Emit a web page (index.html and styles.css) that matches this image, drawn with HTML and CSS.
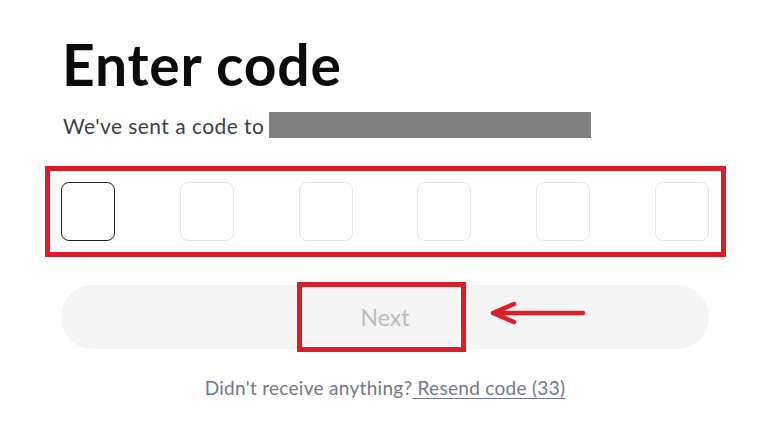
FILE: index.html
```html
<!DOCTYPE html>
<html lang="en">

<head>
  <meta charset="UTF-8" />
  <title>Enter code</title>
  <meta name="viewport" content="width=device-width, initial-scale=1.0">
  <link rel="stylesheet" href="styles.css">
</head>

<body>
  <main class="verify">
    <h1 class="verify-title">Enter code</h1>
    <p class="verify-sub">
      <span>We've sent a code to</span>
      <span class="redacted"></span>
    </p>

    <div class="code-row">
      <div class="code-box active"></div>
      <div class="code-box"></div>
      <div class="code-box"></div>
      <div class="code-box"></div>
      <div class="code-box"></div>
      <div class="code-box"></div>
    </div>

    <button class="next-btn" disabled>Next</button>

    <p class="resend">Didn't receive anything?<a href="#" class="resend-link"> Resend code (33)</a></p>

    <!-- 标注 -->
    <div class="mark mark-code"></div>
    <div class="mark mark-next"></div>
    <svg class="mark-arrow" width="100" height="26" viewBox="0 0 100 26">
      <path d="M94 13 H4 M25 4 L4 13 L25 22" fill="none" stroke="#dc1f29" stroke-width="4.5" stroke-linecap="round" stroke-linejoin="round" />
    </svg>
  </main>
</body>

</html>
```

FILE: styles.css
```css
body {
  margin: 0;
  background: #fff;
  font-family: Lato, 'Noto Sans', sans-serif;
}

.verify {
  position: relative;
  width: 648px;
  padding: 31px 0 0 61px;
}

.verify-title {
  font-size: 57px;
  line-height: 67px;
  font-weight: 700;
  letter-spacing: 0.8px;
  color: #0b0b0b;
  margin: 0 0 0 1px;
}

.verify-sub {
  display: flex;
  align-items: center;
  gap: 5px;
  margin: 14px 0 0 2px;
  height: 26px;
  font-size: 21px;
  letter-spacing: 0.45px;
  color: #3a3f47;
}

.redacted {
  display: block;
  width: 322px;
  height: 26px;
  background: #808080;
}

.code-row {
  display: flex;
  justify-content: space-between;
  margin-top: 44px;
}

.code-box {
  width: 54px;
  height: 59px;
  box-sizing: border-box;
  border: 1px solid #e3e5e8;
  border-radius: 8px;
}

.code-box.active {
  border: 1.5px solid #1e2329;
}

.next-btn {
  display: block;
  width: 100%;
  height: 64px;
  margin-top: 44px;
  border: none;
  border-radius: 32px;
  background: #f5f5f5;
  color: #b9bdc3;
  font-family: inherit;
  font-size: 23px;
  padding: 0;
}

.resend {
  margin: 27px 0 0 0;
  text-align: center;
  font-size: 19px;
  letter-spacing: 0.3px;
  line-height: 24px;
  color: #707a8a;
}

.resend-link {
  color: inherit;
  text-decoration: underline;
  text-underline-offset: 3px;
}

.mark {
  position: absolute;
  box-sizing: border-box;
  border: 5px solid #d81e28;
}

.mark-code {
  left: 45px;
  top: 166px;
  width: 681px;
  height: 91px;
}

.mark-next {
  left: 297px;
  top: 282px;
  width: 169px;
  height: 70px;
}

.mark-arrow {
  position: absolute;
  left: 489px;
  top: 300px;
}
```
